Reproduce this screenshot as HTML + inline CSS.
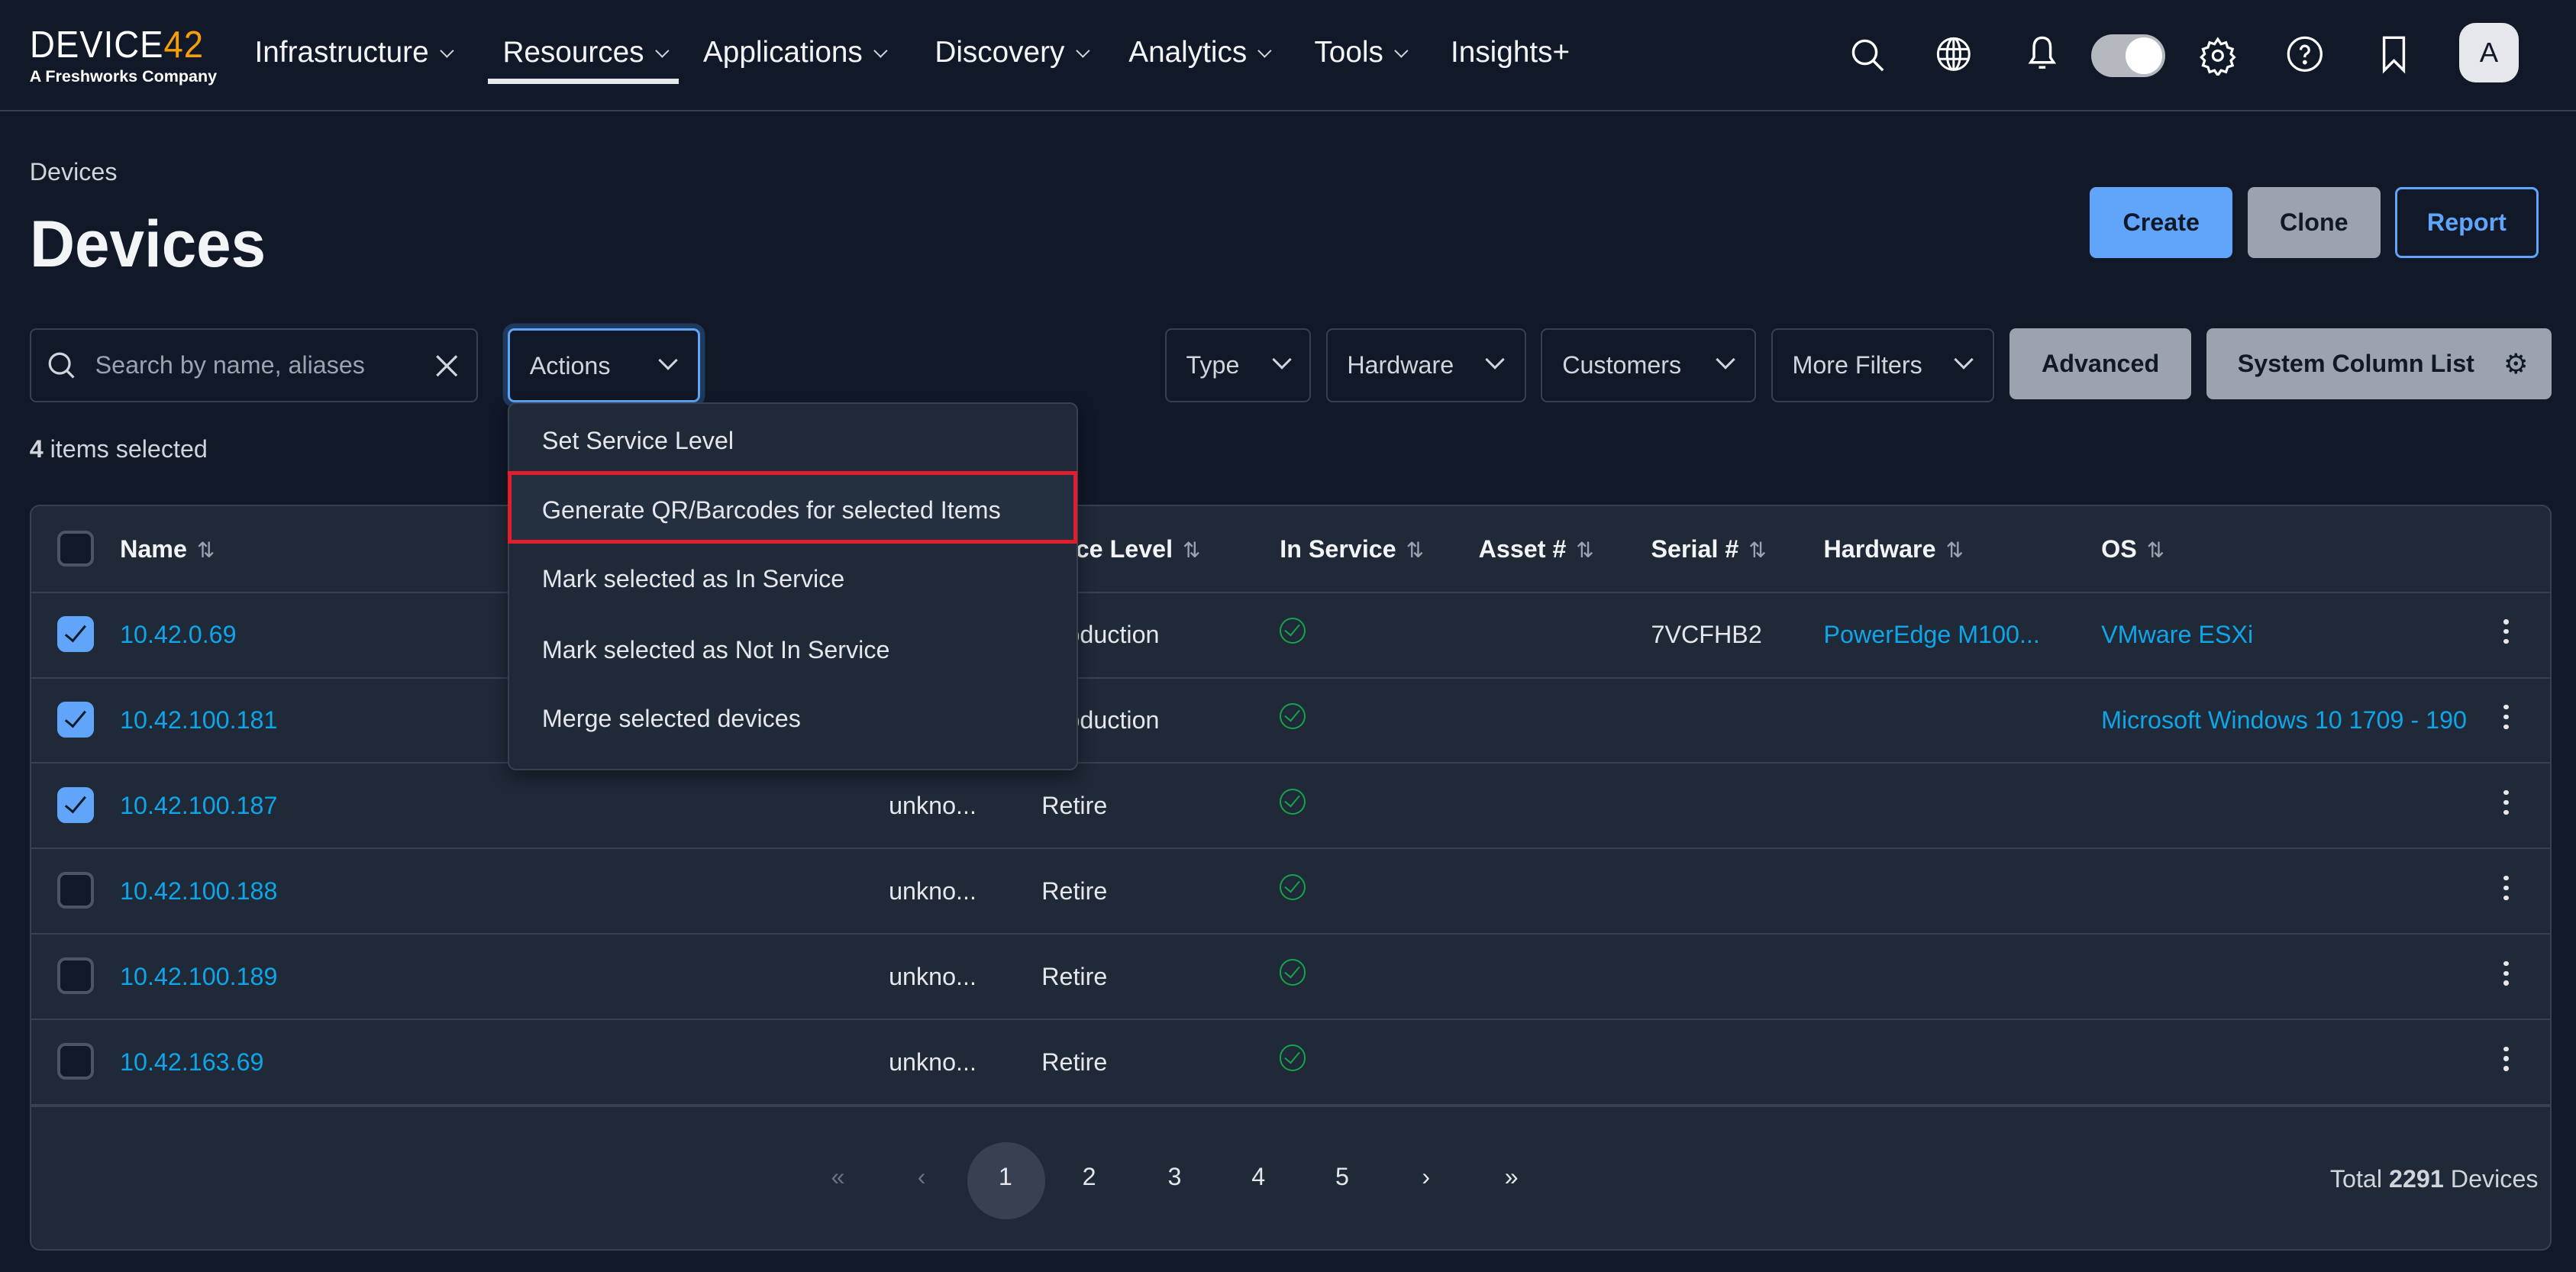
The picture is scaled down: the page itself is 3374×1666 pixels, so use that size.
<!DOCTYPE html>
<html><head><meta charset="utf-8"><style>
html,body{margin:0;padding:0;background:#111827;overflow:hidden}
body{width:3374px;height:1666px}
#r{zoom:2.1518;width:1568px;height:774px;position:relative;font-family:"Liberation Sans",sans-serif;color:#e5e7eb;font-size:15px}
.a{position:absolute;white-space:nowrap}
.nav{position:absolute;left:0;top:0;width:1568px;height:68px;border-bottom:1px solid #374151;box-sizing:border-box}
.ni{position:absolute;top:22px;font-size:18px;color:#f3f4f6}
.ni small{display:inline-block;width:5px;height:5px;border-right:1.3px solid #d1d5db;border-bottom:1.3px solid #d1d5db;transform:rotate(45deg);margin-left:8px;position:relative;top:-4px}
.box{position:absolute;border:1px solid #374151;border-radius:4px;box-sizing:border-box;font-size:15px;color:#d1d5db}
.chev{position:absolute;width:7px;height:7px;border-right:1.5px solid #d1d5db;border-bottom:1.5px solid #d1d5db;transform:rotate(45deg)}
.btn{position:absolute;border-radius:4px;box-sizing:border-box;font-size:15px;font-weight:bold;display:flex;align-items:center;justify-content:center}
.card{position:absolute;left:18px;top:307px;width:1535px;height:454px;background:#1f2937;border:1px solid #374151;border-radius:6px;box-sizing:border-box}
.row{position:absolute;left:18px;width:1535px;height:52px;border-top:1px solid #374151;box-sizing:border-box}
.cb{position:absolute;left:17px;top:14px;width:22px;height:22px;border-radius:5px;border:2px solid #4b5563;box-sizing:border-box;background:#111827}
.cb.on{background:#60a5fa;border-color:#60a5fa}
.cb.on:after{content:"";position:absolute;left:6px;top:1px;width:5px;height:11px;border-right:1.5px solid #111827;border-bottom:1.5px solid #111827;transform:rotate(40deg)}
.c{position:absolute;top:17px;font-size:15px;color:#e5e7eb}
.lk{color:#0ea5e9}
.th{position:absolute;top:18px;font-weight:bold;font-size:15px;color:#f3f4f6}
.th i{font-style:normal;font-weight:normal;color:#9ca3af;font-size:13px;margin-left:6px}
.chk{position:absolute;left:761px;top:15px;width:14px;height:14px;border:1.3px solid #16a34a;border-radius:50%}
.chk:after{content:"";position:absolute;left:4px;top:1px;width:4px;height:8px;border-right:1.3px solid #16a34a;border-bottom:1.3px solid #16a34a;transform:rotate(40deg)}
.keb{position:absolute;left:1506px;top:16px;width:3px}
.keb b{display:block;width:3px;height:3px;background:#e5e7eb;border-radius:50%;margin-bottom:3px}
.dd{position:absolute;left:309px;top:245px;width:347px;height:224px;background:#1f2937;border:1px solid #374151;border-radius:5px;box-sizing:border-box;box-shadow:0 4px 10px rgba(0,0,0,.4)}
.di{position:absolute;left:20px;font-size:15px;color:#e5e7eb}
.pg{position:absolute;top:708px;font-size:15px;color:#e5e7eb;width:30px;text-align:center}
</style></head><body><div id="r">
<div class="nav">
 <div class="a" style="left:18px;top:14px;font-size:23px;letter-spacing:0.5px;color:#fff;transform:scaleX(0.92);transform-origin:left">DEVICE<span style="color:#f59e0b">42</span></div>
 <div class="a" style="left:18px;top:41px;font-size:10px;font-weight:bold;color:#fff">A Freshworks Company</div>
 <div class="ni" style="left:155px">Infrastructure<small></small></div>
 <div class="ni" style="left:306px">Resources<small></small></div>
 <div class="a" style="left:297px;top:48px;width:116px;height:3px;background:#e5e7eb"></div>
 <div class="ni" style="left:428px">Applications<small></small></div>
 <div class="ni" style="left:569px">Discovery<small></small></div>
 <div class="ni" style="left:687px">Analytics<small></small></div>
 <div class="ni" style="left:800px">Tools<small></small></div>
 <div class="ni" style="left:883px">Insights+</div>
 <svg class="a" style="left:1125px;top:22px" width="24" height="24" viewBox="0 0 24 24" fill="none" stroke="#fff" stroke-width="1.6"><circle cx="10" cy="10" r="7"/><path d="M15 15l6 6"/></svg>
 <svg class="a" style="left:1177px;top:21px" width="24" height="24" viewBox="0 0 24 24" fill="none" stroke="#fff" stroke-width="1.4"><circle cx="12" cy="12" r="9.5"/><ellipse cx="12" cy="12" rx="4" ry="9.5"/><path d="M2.5 9h19M2.5 15h19M12 2.5v19"/></svg>
 <svg class="a" style="left:1231px;top:20px" width="24" height="26" viewBox="0 0 24 26" fill="none" stroke="#fff" stroke-width="1.6"><path d="M12 3c-4 0-5 3-5 6v6l-2 3h14l-2-3V9c0-3-1-6-5-6z"/><path d="M10 21h4"/></svg>
 <div class="a" style="left:1273px;top:21px;width:45px;height:26px;border-radius:13px;background:#b4b8bf"></div>
 <div class="a" style="left:1294px;top:23px;width:22px;height:22px;border-radius:50%;background:#fff"></div>
 <svg class="a" style="left:1338px;top:22px" width="24" height="24" viewBox="0 0 24 24" fill="none" stroke="#fff" stroke-width="1.5"><circle cx="12" cy="12" r="3"/><path d="M12 2l2 3 3-1 1 3 3 1-1 3 2 2-2 2 1 3-3 1-1 3-3-1-2 3-2-3-3 1-1-3-3-1 1-3-2-2 2-2-1-3 3-1 1-3 3 1z"/></svg>
 <svg class="a" style="left:1391px;top:21px" width="24" height="24" viewBox="0 0 24 24" fill="none" stroke="#fff" stroke-width="1.5"><circle cx="12" cy="12" r="10"/><path d="M9.5 9.5a2.5 2.5 0 1 1 3.5 2.3c-.7.4-1 .9-1 1.7v.5"/><circle cx="12" cy="17" r=".6" fill="#fff"/></svg>
 <svg class="a" style="left:1447px;top:21px" width="20" height="24" viewBox="0 0 20 24" fill="none" stroke="#fff" stroke-width="1.6"><path d="M4 2h12v20l-6-6-6 6z"/></svg>
 <div class="a" style="left:1497px;top:14px;width:36px;height:36px;border-radius:10px;background:#e5e7eb;color:#111827;font-size:17px;text-align:center;line-height:36px">A</div>
</div>
<div class="a" style="left:18px;top:96px;font-size:15px;color:#d1d5db">Devices</div>
<div class="a" style="left:18px;top:126px;font-size:40px;font-weight:bold;color:#f3f4f6;transform:scaleX(0.95);transform-origin:left">Devices</div>
<div class="btn" style="left:1272px;top:114px;width:87px;height:43px;background:#60a5fa;color:#111827">Create</div>
<div class="btn" style="left:1368px;top:114px;width:81px;height:43px;background:#9ca3af;color:#111827">Clone</div>
<div class="btn" style="left:1458px;top:114px;width:87px;height:43px;border:1.5px solid #60a5fa;color:#60a5fa">Report</div>

<div class="box" style="left:18px;top:200px;width:273px;height:45px">
 <svg class="a" style="left:10px;top:13px" width="18" height="18" viewBox="0 0 18 18" fill="none" stroke="#d1d5db" stroke-width="1.5"><circle cx="7.5" cy="7.5" r="6"/><path d="M12 12l4 4"/></svg>
 <div class="a" style="left:39px;top:13px;color:#9ca3af">Search by name, aliases</div>
 <svg class="a" style="left:245px;top:14px" width="16" height="16" viewBox="0 0 16 16" stroke="#d1d5db" stroke-width="1.5"><path d="M2 2l12 12M14 2L2 14"/></svg>
</div>
<div class="box" style="left:309px;top:200px;width:117px;height:45px;border:1.5px solid #60a5fa;box-shadow:0 0 0 3px #1e3a5f">
 <div class="a" style="left:12px;top:13px;color:#d1d5db">Actions</div>
 <div class="chev" style="left:92px;top:14px"></div>
</div>
<div class="box" style="left:709px;top:200px;width:89px;height:45px"><div class="a" style="left:12px;top:13px">Type</div><div class="chev" style="left:66px;top:14px"></div></div>
<div class="box" style="left:807px;top:200px;width:122px;height:45px"><div class="a" style="left:12px;top:13px">Hardware</div><div class="chev" style="left:98px;top:14px"></div></div>
<div class="box" style="left:938px;top:200px;width:131px;height:45px"><div class="a" style="left:12px;top:13px">Customers</div><div class="chev" style="left:107px;top:14px"></div></div>
<div class="box" style="left:1078px;top:200px;width:136px;height:45px"><div class="a" style="left:12px;top:13px">More Filters</div><div class="chev" style="left:112px;top:14px"></div></div>
<div class="btn" style="left:1223px;top:200px;width:111px;height:43px;background:#9ca3af;color:#111827">Advanced</div>
<div class="btn" style="left:1343px;top:200px;width:210px;height:43px;background:#9ca3af;color:#111827;justify-content:flex-start;padding-left:19px">System Column List <span style="position:absolute;right:14px;font-size:17px;font-weight:normal">⚙</span></div>
<div class="a" style="left:18px;top:265px;font-size:15px;color:#d1d5db"><b>4</b> items selected</div>

<div class="card"></div>
<div class="row" style="top:308px;border-top:none">
 <div class="cb" style="top:15px"></div>
 <div class="th" style="left:55px">Name<i>⇅</i></div>
 <div class="th" style="left:600px">Service Level<i>⇅</i></div>
 <div class="th" style="left:761px">In Service<i>⇅</i></div>
 <div class="th" style="left:882px">Asset #<i>⇅</i></div>
 <div class="th" style="left:987px">Serial #<i>⇅</i></div>
 <div class="th" style="left:1092px">Hardware<i>⇅</i></div>
 <div class="th" style="left:1261px">OS<i>⇅</i></div>
</div>
<div class="row" style="top:360px"><div class="cb on"></div><div class="c lk" style="left:55px">10.42.0.69</div><div class="c" style="left:616px">Production</div><div class="chk"></div><div class="c" style="left:987px">7VCFHB2</div><div class="c lk" style="left:1092px">PowerEdge M100...</div><div class="c lk" style="left:1261px">VMware ESXi</div><div class="keb"><b></b><b></b><b></b></div></div>
<div class="row" style="top:412px"><div class="cb on"></div><div class="c lk" style="left:55px">10.42.100.181</div><div class="c" style="left:616px">Production</div><div class="chk"></div><div class="c lk" style="left:1261px">Microsoft Windows 10 1709 - 190</div><div class="keb"><b></b><b></b><b></b></div></div>
<div class="row" style="top:464px"><div class="cb on"></div><div class="c lk" style="left:55px">10.42.100.187</div><div class="c" style="left:523px">unkno...</div><div class="c" style="left:616px">Retire</div><div class="chk"></div><div class="keb"><b></b><b></b><b></b></div></div>
<div class="row" style="top:516px"><div class="cb"></div><div class="c lk" style="left:55px">10.42.100.188</div><div class="c" style="left:523px">unkno...</div><div class="c" style="left:616px">Retire</div><div class="chk"></div><div class="keb"><b></b><b></b><b></b></div></div>
<div class="row" style="top:568px"><div class="cb"></div><div class="c lk" style="left:55px">10.42.100.189</div><div class="c" style="left:523px">unkno...</div><div class="c" style="left:616px">Retire</div><div class="chk"></div><div class="keb"><b></b><b></b><b></b></div></div>
<div class="row" style="top:620px"><div class="cb"></div><div class="c lk" style="left:55px">10.42.163.69</div><div class="c" style="left:523px">unkno...</div><div class="c" style="left:616px">Retire</div><div class="chk"></div><div class="keb"><b></b><b></b><b></b></div></div>
<div class="a" style="left:18px;top:672px;width:1535px;height:2px;background:#374151"></div>

<div class="pg" style="left:495px;color:#6b7280">«</div>
<div class="pg" style="left:546px;color:#6b7280">‹</div>
<div class="a" style="left:589px;top:695px;width:47px;height:47px;border-radius:50%;background:#374151"></div>
<div class="pg" style="left:597px">1</div>
<div class="pg" style="left:648px">2</div>
<div class="pg" style="left:700px">3</div>
<div class="pg" style="left:751px">4</div>
<div class="pg" style="left:802px">5</div>
<div class="pg" style="left:853px">›</div>
<div class="pg" style="left:905px">»</div>
<div class="a" style="right:23px;top:709px;font-size:15px;color:#d1d5db">Total <b>2291</b> Devices</div>

<div class="dd">
 <div class="di" style="top:14px">Set Service Level</div>
 <div class="a" style="left:-1px;top:41px;width:347px;height:44px;border:2.5px solid #e11d2e;box-sizing:border-box;background:#243040"></div>
 <div class="di" style="top:56px">Generate QR/Barcodes for selected Items</div>
 <div class="di" style="top:98px">Mark selected as In Service</div>
 <div class="di" style="top:141px">Mark selected as Not In Service</div>
 <div class="di" style="top:183px">Merge selected devices</div>
</div>
</div></body></html>
